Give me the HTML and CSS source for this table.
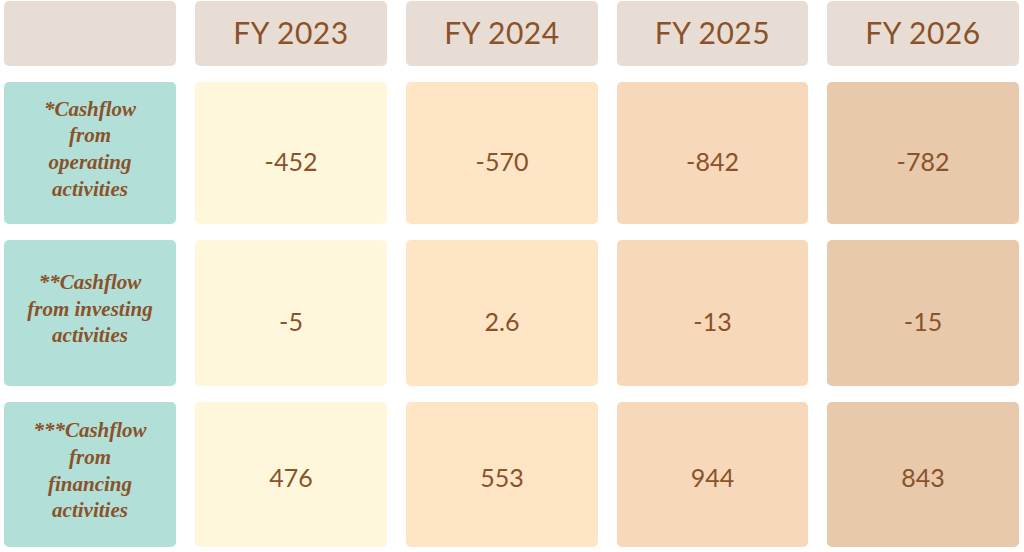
FILE: index.html
```html
<!DOCTYPE html>
<html>
<head>
<meta charset="utf-8">
<link rel="stylesheet" href="styles.css">
</head>
<body>
<div class="grid">
  <div class="cell head"></div>
  <div class="cell head">FY 2023</div>
  <div class="cell head">FY 2024</div>
  <div class="cell head">FY 2025</div>
  <div class="cell head">FY 2026</div>

  <div class="cell label">*Cashflow<br>from<br>operating<br>activities</div>
  <div class="cell num c1">-452</div>
  <div class="cell num c2">-570</div>
  <div class="cell num c3">-842</div>
  <div class="cell num c4">-782</div>

  <div class="cell label">**Cashflow<br>from investing<br>activities</div>
  <div class="cell num c1">-5</div>
  <div class="cell num c2">2.6</div>
  <div class="cell num c3">-13</div>
  <div class="cell num c4">-15</div>

  <div class="cell label">***Cashflow<br>from<br>financing<br>activities</div>
  <div class="cell num c1 low">476</div>
  <div class="cell num c2 low">553</div>
  <div class="cell num c3 low">944</div>
  <div class="cell num c4 low">843</div>
</div>
</body>
</html>
```

FILE: styles.css
```css
html, body {
  margin: 0;
  padding: 0;
  background: #ffffff;
}
.grid {
  display: grid;
  grid-template-columns: 172px 192px 192px 191px 192px;
  grid-template-rows: 65px 142px 146px 145px;
  column-gap: 19px;
  row-gap: 16px;
  padding: 1px 0 0 4px;
  color: #8a5229;
}
.cell {
  border-radius: 5px;
  display: flex;
  align-items: center;
  justify-content: center;
  text-align: center;
  box-sizing: border-box;
}
.head {
  background: #e8ddd4;
  font-family: "Lato", "Noto Sans", sans-serif;
  font-weight: 400;
  font-size: 30px;
  letter-spacing: 0.5px;
  padding-bottom: 4px;
}
.label {
  background: #b2e0d8;
  font-family: "Liberation Serif", serif;
  font-style: italic;
  font-weight: bold;
  font-size: 21px;
  line-height: 26.7px;
  padding-bottom: 8px;
}
.num {
  font-family: "Lato", "Noto Sans", sans-serif;
  font-weight: 400;
  font-size: 25px;
  padding-top: 16px;
}
.num.low {
  padding-top: 5px;
}
.c1 { background: #fef7db; }
.c2 { background: #fee5c6; }
.c3 { background: #f7d8ba; }
.c4 { background: #e8c9ab; }
```
